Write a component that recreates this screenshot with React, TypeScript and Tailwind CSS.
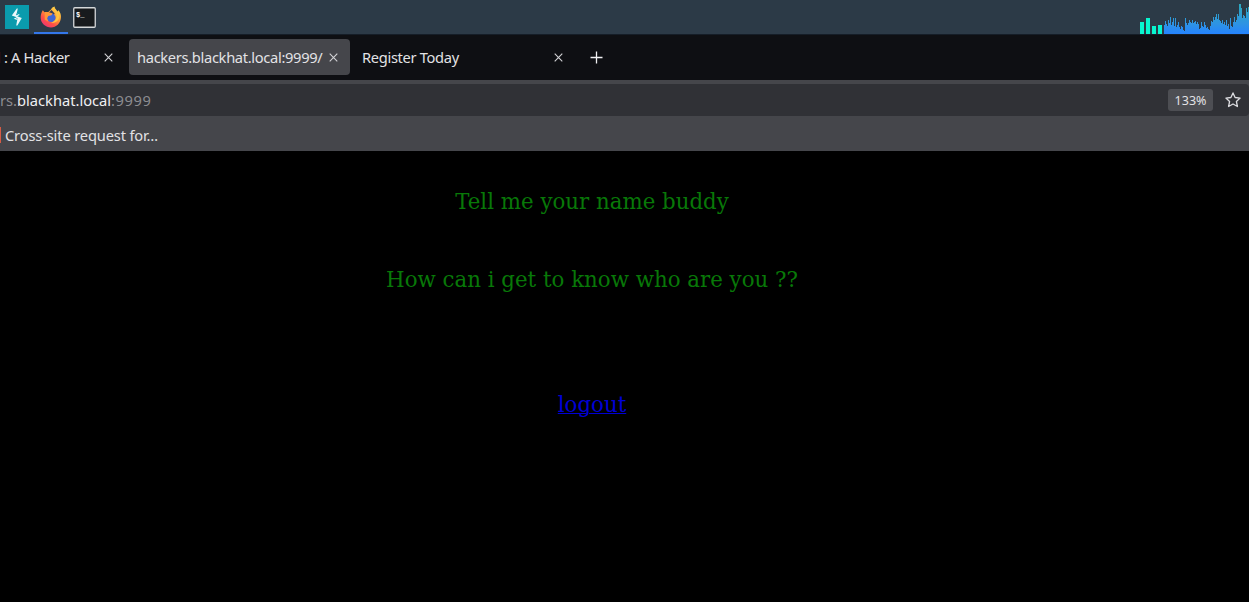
import React from "react";

const LOAD_HISTORY = [
  9, 13, 10, 8, 14, 11, 17, 9, 12, 16, 8, 16, 7, 9, 12, 7, 5, 8, 7, 4, 3, 16, 11, 9, 11, 14, 12, 11, 14, 11, 12, 13, 10, 12, 10,
  5, 6, 12, 8, 7, 12, 9, 6, 7, 5, 4, 8, 13, 12, 17, 14, 17, 20, 15, 20, 14, 13, 11, 14, 10, 12, 9, 14, 8, 10, 5, 16, 8, 7, 12,
  17, 12, 14, 20, 18, 30, 30, 26, 16, 19, 18, 16, 26, 22, 27,
];

function ProxyIcon() {
  return (
    <svg className="block h-6 w-6" viewBox="0 0 24 24">
      <rect width="24" height="24" fill="#0a9bad" />
      <path d="M12.8 3.5h-1L6.8 10.4l4.9 1.8-3 1.5 3.5 1.4-1 5.4h1.2L16.8 13l-4.6-1.7 2.7-1.6-3.2-1.1Z" fill="#eaf8fa" />
      <path d="m11.4 8.2-.3 2.1 2.2-.5ZM12.4 13l-1.3.8 1.3.7Z" fill="#0a9bad" />
    </svg>
  );
}

function FirefoxIcon() {
  return (
    <svg className="block h-[22px] w-[22px]" viewBox="0 0 22 22">
      <defs>
        <linearGradient id="fox" x1="0.85" y1="0.05" x2="0.2" y2="1">
          <stop offset="0" stopColor="#ffe04f" />
          <stop offset="0.4" stopColor="#ff9a35" />
          <stop offset="0.7" stopColor="#ff5047" />
          <stop offset="1" stopColor="#e83278" />
        </linearGradient>
      </defs>
      <path
        d="M2.8 4.3 4.5 6.2c1.2-.4 2.5-.4 3.6 0L11 3.5C11.6 2 13 .7 14.5.4c-.2 2 2 3.2 3 5l1-1.2c1.8 2.2 2.8 4.8 2.4 7.9C20.3 17.5 16.4 21.5 11 21.5S.9 17.3.7 12.1C.6 9.2 1.3 6.5 2.8 4.3Z"
        fill="url(#fox)"
      />
      <path d="M9 6.5 11.5 4l3.2 3.6-2 3-3-.5Z" fill="#343c59" />
      <circle cx="11.3" cy="11.8" r="4.3" fill="#3f66d5" />
      <path d="M4.8 6.1c2.8-.6 5.4.2 7.9 1.5L11.5 9.3l-3.2.7-1.2 2.2 1.2 3.5-3.6-2.1Z" fill="#ff9838" />
      <path d="M14.5.4c-.9 2.1-.3 3.5.8 5.3 2.4 3.7 1.5 9-4.3 11.2 5.6.5 8.9-3.3 8-7.3C18.2 6 14.4 4.4 14.5.4Z" fill="#ffc441" />
    </svg>
  );
}

function TerminalIcon() {
  return (
    <svg className="block h-[21px] w-[23px]" viewBox="0 0 23 21">
      <rect x="0.75" y="0.75" width="21.5" height="19.5" rx="1" fill="#171a1d" stroke="#d5d8da" strokeWidth="1.3" />
      <text x="3" y="9.5" fill="#fff" fontSize="7" fontWeight="700" className="font-['Liberation_Mono',monospace]">
        $_
      </text>
    </svg>
  );
}

function SystemGraph() {
  return (
    <svg className="block h-[34px] w-[110px]" viewBox="0 0 110 34" shapeRendering="crispEdges">
      <defs>
        <linearGradient id="load" gradientUnits="userSpaceOnUse" x1="0" y1="4" x2="0" y2="34">
          <stop offset="0" stopColor="#2ca9bd" />
          <stop offset="0.65" stopColor="#2e94e3" />
          <stop offset="1" stopColor="#2583ff" />
        </linearGradient>
      </defs>
      <path d="M1 22h4v12H1ZM7 18h4v16H7ZM13 26h4v8h-4ZM19 25h4v9h-4Z" fill="#08f5cf" />
      {LOAD_HISTORY.map((value, i) => (
        <rect key={i} x={25 + i} y={34 - value} width="1" height={value} fill="url(#load)" />
      ))}
    </svg>
  );
}

function Cross() {
  return (
    <svg className="block h-[9px] w-[9px] shrink-0" viewBox="0 0 9 9" fill="none" stroke="#d2d2d5" strokeWidth="1.1">
      <path d="m.7.7 7.6 7.6m0-7.6L.7 8.3" />
    </svg>
  );
}

export default function App() {
  return (
    <div className="flex h-[602px] w-[1249px] flex-col overflow-hidden bg-black font-['Noto_Sans',sans-serif] text-[14.67px] text-[#e2e2e5]">
      <header className="flex h-[35px] shrink-0 justify-between border-b border-[#151d27] bg-[#2c3a47]">
        <div className="flex">
          <div className="flex w-[34px] items-center pl-[5px]"><ProxyIcon /></div>
          <div className="flex w-[34px] items-center justify-center border-b-2 border-[#3477eb] pt-0.5"><FirefoxIcon /></div>
          <div className="flex items-center pl-[5px]"><TerminalIcon /></div>
        </div>
        <SystemGraph />
      </header>

      <nav className="flex h-[45px] shrink-0 items-center bg-[#0e0f13] pb-px whitespace-nowrap">
        <div className="flex h-9 w-[129px] items-center justify-between pr-4">
          <span className="-ml-[3px] tracking-[-0.35px]">l : A Hacker</span>
          <Cross />
        </div>
        <div className="flex h-9 w-[221px] items-center justify-between rounded bg-[#45464b] pr-3 pl-2">
          <span className="tracking-[-0.32px]">hackers.blackhat.local:9999/</span>
          <Cross />
        </div>
        <div className="flex h-9 w-[213px] items-center justify-between pl-3">
          <span className="tracking-[-0.32px]">Register Today</span>
          <Cross />
        </div>
        <svg className="ml-[27px] block h-[13px] w-[13px]" viewBox="0 0 13 13" fill="none" stroke="#f0f0f2" strokeWidth="1.3">
          <path d="M6.5.5v12M.5 6.5h12" />
        </svg>
      </nav>

      <div className="h-[36px] shrink-0 bg-[#45464b] pt-1">
        <div className="flex h-8 items-center justify-between rounded-r bg-[#303136] pr-2">
          <div className="text-[#8c8c91]">
            rs.<span className="text-[#efeff2]">blackhat.local</span><span className="tracking-[0.6px]">:9999</span>
          </div>
          <div className="flex items-center gap-3">
            <div className="flex h-[22px] w-[45px] items-center justify-center rounded-[3px] bg-[#4d4e53] pt-0.5 text-[12.5px]">133%</div>
            <svg className="block h-4 w-4" viewBox="0 0 16 16" fill="none" stroke="#dcdce0" strokeWidth="1.3" strokeLinejoin="round">
              <path d="m8 .9 2.1 4.6 5 .6-3.7 3.4 1 5L8 12l-4.4 2.5 1-5L.9 6.1l5-.6Z" />
            </svg>
          </div>
        </div>
      </div>

      <div className="flex h-[35px] shrink-0 items-center bg-[#45464b] pt-0.5">
        <div className="mr-1 h-4 w-px bg-[#d65b45]" />
        <span className="tracking-[-0.15px]">Cross-site request for…</span>
      </div>

      <main className="flex w-[1184px] flex-1 flex-col items-center bg-black pt-[38px] font-['DejaVu_Serif',serif] text-[21.33px] leading-[26px] text-[#087808]">
        <p>Tell me your name buddy</p>
        <p className="mt-[52px]">How can i get to know who are you ??</p>
        <a href="#logout" className="mt-[99px] text-[#0000d5] underline decoration-1 underline-offset-1">logout</a>
      </main>
    </div>
  );
}
